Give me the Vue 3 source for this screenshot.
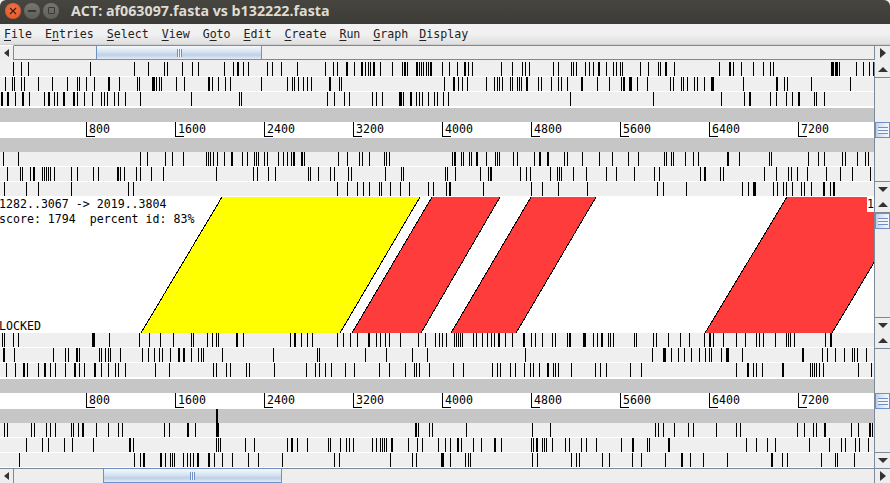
<script setup>
const menus = [
  { pre: '', key: 'F', post: 'ile' },
  { pre: 'E', key: 'n', post: 'tries' },
  { pre: '', key: 'S', post: 'elect' },
  { pre: '', key: 'V', post: 'iew' },
  { pre: 'G', key: 'o', post: 'to' },
  { pre: '', key: 'E', post: 'dit' },
  { pre: '', key: 'C', post: 'reate' },
  { pre: '', key: 'R', post: 'un' },
  { pre: '', key: 'G', post: 'raph' },
  { pre: '', key: 'D', post: 'isplay' }
]

const rulerMarks = [800, 1600, 2400, 3200, 4000, 4800, 5600, 6400, 7200].map((label, i) => ({
  label,
  x: Math.round(86.3 + i * 88.9)
}))

const scoreLine = 'score: 1794  percent id: 83%'

// Each feature row: [origin, "x x:w ..."] where x is measured in thirds of a pixel.
const parse = (segments) =>
  segments.flatMap(([origin, list]) =>
    list.split(' ').map((item) => {
      const [x, w] = item.split(':')
      return { x: Math.floor(origin + Number(x) / 3), w: Number(w || 1) }
    })
  )

const topBefore = [
  [[0, '40 64 85 271 403 445 493 502 547 577 595 673 700 712:2 730 745 802 817 844 892'], [300, '76 100 112 140:2 163 183 188 195 205 210 220:2 240 277 307 312:2 322 348 353 358 365 370 380 385 392:2 427 448 472 492:2 505 518 604 637 667 675 688 760 775 815 820 828 856 868 880 896:2 920 940 948 962 968 1020 1045 1075 1080 1095:2 1122'], [680, '118 147:2 160 184 220 250 271 280 454:3 465:2 472 478 529 550 568 580']],
  [[0, '16 37 43 64 73 115 157 202 232 238 259 283 325:2 358 412 418 457:3 469 478 484 529 553 625:2 637 655 676 691 784 862 877 883 895'], [300, '10 22 34 88:2 118 124 433 460:2 475 487 502 559 583 592 598 607 631 637 652 658 664 679 682 715 724 754 775 784 802 844:2 892 928 964 970:2 988:3 1012 1042 1111 1120'], [680, '4 10 22 43 52 73 94:3 190 288:2 313 322 394 511']],
  [[0, '4:2 22:2 46 67:2 88 133 145:2 163 172 190:2 220:2 232 253 277 304 313 322 343 355 376 421 574 718 724'], [300, '82 103 133 148 217 229 247 298 301 304 310 331:2 349 358 367 385 403 412 430 445 811 1060'], [680, '124 193 207:2 271 289 319 337 354:2 403 409 433']]
].map(parse)

const topAfter = [
  [[0, '10 55 421 442 496 517 550 620 626 632 640 652 673 694:2 727 742 763 768 775 793 802 835 850 862 874 880:2'], [300, '3 8 13 115 142 178 187 208 253 260 268 456 462:2 484 490 508 514 529 532 559 586 592 598 640 652 703 718:2 741:2 793 802 847 898 937 985 1015 1093 1099 1114 1120 1155'], [690, '10 25 112:2 148 238 244 355 385 403 457 466 502 526 535']],
  [[0, '22 61 67 91 100:2 127 133 139 145 151 163 214 232 280 295 352:2 361 373 408 421 454 490 649 760 772 805 826'], [300, '25 31 55 91 103 145 154 256 304 310 436 442 466 541 565 571:2 661 679 691 751 772 778 784 820 859 919 949 1003 1063 1078'], [690, '31 43:2 91 100 223 259 295 304 322 352 409 451 487 541']],
  [[0, '13 79 115 214 385 400'], [300, '112 142 172 190 208 238 244 271 301 328 385 400 439 448:2 550 694 727 775 862 1072 1090 1159'], [690, '157 175 190:3 250 262 280 289 307 334 343 364 400:2 421 430:2']]
].map(parse)

const bottomBefore = [
  [[0, '7 13 40 55 277:3 328 418 448 481 520 574 580 622 637 649 655 709:2 730 871 883:2'], [300, '4 22 37 112 130 151 172 205:2 229 241 256 268 301 355 376 406 418 427 439 463 469 475 481 487 520 529 547 562 574 583 595:2 616 637 670:2 694 706 727 757 766 802 808:2 850:3 880 892 904:2 925 931 940 1003 1009 1060 1069 1105 1141 1168'], [690, '43 58:2 70 100 139 166 199 208 220 256 289 295 301 313 406 421:2']],
  [[0, '10:2 43 160 196 205 229:2 238 298 304 316 325 331 361 427 445 463 478 487 511 535:2 550:2 574 595 604 610 667 820'], [300, '52 58 196 259 337 382 676 1057 1090:3 1114 1135 1153'], [690, '4 28 46 58 64 94 109:2 115 157 337:2 397 412 436 463 487 493 502 529']],
  [[0, '19 46 70:2 82 115 133:2 151 166 196 223:2 238 253 283:2 304 325 346 355 376 466 508 640 649 679 691 739 748 823'], [300, '19 46 58 76 94 136 163 238 268 316 343 349 358 388 460 490 577 592 601 631 646 673 691 700 718 742:2 760 766 775 814 886 901 919 991 1024'], [690, '139 172:2 190 199 217 277:2 361 367 373 379 388 400 505 544']]
].map(parse)

const bottomAfter = [
  [[0, '13 22 94 103 139 151 166 214 220 235 247:2 289 325 355 367 493 508 562:2 586 648:3'], [300, '346:2 355 388 397 499 697 751 1066 1075 1090 1123 1165'], [690, '10 79 139 151 322 343 370 379 403:2 484 505 538:2 547']],
  [[0, '79 127 145 193 217 280 388:2 400 649 655 661 736 763 862 874:2 892'], [300, '22 85 91 121 139 148 160 217 229 241 247 253 259 274:2 325 352 367 415 436 451 472:2 484 520 544 583:2 604 694 700 709:2 727 733 739 757 796 808 844 859 889 964 997:2 1042 1048 1105:2'], [690, '169 199 232 256 358 418 454 466 496 508 535']],
  [[0, '58 403 421 430:2 481:2 496 511 517 523 550 562 571 580 592:2 625:2 643 667 697 745 775 847'], [300, '103 118 271 337 349 424:2 430 451 496 505 511 697 712 814 829 838 907 928 997 1024 1096 1144:2'], [690, '1 40 112 244:2 277 292 394 436 442 493']]
].map(parse)

const panels = [
  { id: 'top', before: topBefore, after: topAfter, cursor: false },
  { id: 'bottom', before: bottomBefore, after: bottomAfter, cursor: true }
]

const matches = [
  { fill: '#ffff00', top: [222, 420], bottom: [141, 340] },
  { fill: '#ff3c3c', top: [432, 500], bottom: [352, 421] },
  { fill: '#ff3c3c', top: [531, 596], bottom: [451, 516] },
  { fill: '#ff3c3c', top: [787, 913], bottom: [705, 832] }
]
</script>

<template>
  <div class="window">
    <header class="titlebar">
      <span class="wm wm-close">
        <svg width="8" height="8" viewBox="0 0 8 8"><path d="M1 1l6 6M7 1L1 7" stroke="#4d1a08" stroke-width="1.3" /></svg>
      </span>
      <span class="wm wm-min"><i class="min-glyph"></i></span>
      <span class="wm wm-max"><i class="max-glyph"></i></span>
      <span class="title">ACT: af063097.fasta vs b132222.fasta</span>
    </header>

    <nav class="menubar">
      <span v-for="m in menus" :key="m.pre + m.key + m.post" class="menu">{{ m.pre }}<u>{{ m.key }}</u>{{ m.post }}</span>
    </nav>

    <div class="hscroll">
      <button class="hbtn"><i class="arrow-left"></i></button>
      <div class="htrack">
        <div class="hthumb hthumb-top"><i class="vgrip"></i></div>
      </div>
      <button class="hbtn hbtn-end"><i class="arrow-right"></i></button>
    </div>

    <template v-for="(panel, p) in panels" :key="panel.id">
      <section class="panel">
        <div class="panel-body">
          <div v-for="(row, r) in panel.before" :key="r" class="frame">
            <svg class="frame-svg" width="874" height="14">
              <rect v-for="(t, k) in row" :key="k" :x="t.x" y="0" :width="t.w" height="14" fill="#000" />
            </svg>
          </div>
          <div class="band band-first"></div>
          <div class="ruler">
            <span v-for="m in rulerMarks" :key="m.label" class="mark" :style="{ left: m.x + 'px' }">{{ m.label }}</span>
          </div>
          <div class="band">
            <i v-if="panel.cursor" class="cursor"></i>
          </div>
          <div v-for="(row, r) in panel.after" :key="r" class="frame">
            <svg class="frame-svg" width="874" height="14">
              <rect v-for="(t, k) in row" :key="k" :x="t.x" y="0" :width="t.w" height="14" fill="#000" />
            </svg>
          </div>
        </div>
        <div class="vscroll">
          <button class="vbtn"><i class="arrow-up"></i></button>
          <div class="vtrack">
            <div class="vthumb vthumb-ruler"><i class="hgrip"></i></div>
          </div>
          <button class="vbtn vbtn-end"><i class="arrow-down"></i></button>
        </div>
      </section>

      <section v-if="p === 0" class="compare">
        <div class="compare-body">
          <svg class="compare-svg" width="874" height="136" viewBox="0 0 874 136">
            <g v-for="(m, i) in matches" :key="i">
              <polygon :points="`${m.top[0]},0 ${m.top[1]},0 ${m.bottom[1]},136 ${m.bottom[0]},136`" :fill="m.fill" />
              <line :x1="m.top[0]" y1="0" :x2="m.bottom[0]" y2="136" stroke="#000" shape-rendering="crispEdges" />
              <line :x1="m.top[1]" y1="0" :x2="m.bottom[1]" y2="136" stroke="#000" shape-rendering="crispEdges" />
            </g>
          </svg>
          <div class="info">{{ '1282..3067 -> 2019..3804' }}</div>
          <div class="info info-second">{{ scoreLine }}</div>
          <div class="info info-locked">LOCKED</div>
          <div class="info-right">1</div>
        </div>
        <div class="vscroll">
          <button class="vbtn"><i class="arrow-up"></i></button>
          <div class="vtrack">
            <div class="vthumb"><i class="hgrip"></i></div>
          </div>
          <button class="vbtn vbtn-end"><i class="arrow-down"></i></button>
        </div>
      </section>
    </template>

    <div class="hscroll hscroll-bottom">
      <button class="hbtn"><i class="arrow-left"></i></button>
      <div class="htrack">
        <div class="hthumb hthumb-bottom"><i class="vgrip"></i></div>
      </div>
      <button class="hbtn hbtn-end"><i class="arrow-right"></i></button>
    </div>
  </div>
</template>

<style>
html, body { margin: 0; background: #ffffff; overflow: hidden; }
</style>

<style scoped>
.window {
  width: 890px;
  height: 483px;
  overflow: hidden;
  display: flex;
  flex-direction: column;
  font-family: "DejaVu Sans Mono", "Liberation Mono", monospace;
  font-size: 11.6px;
  color: #000;
  background: #eeeeee;
}

.titlebar {
  height: 24px;
  flex: none;
  display: flex;
  align-items: center;
  padding: 0 0 3px 5px;
  box-sizing: border-box;
  background: linear-gradient(#46453f, #3c3b37);
  border-radius: 6px 6px 0 0;
}
.wm {
  width: 16px;
  height: 16px;
  border-radius: 50%;
  margin-right: 3px;
  display: flex;
  align-items: center;
  justify-content: center;
  box-sizing: border-box;
  flex: none;
}
.wm-close { background: radial-gradient(circle at 50% 40%, #f2764a, #dc5020); }
.wm-min, .wm-max { background: linear-gradient(#777671, #5f5e59); }
.min-glyph { width: 8px; height: 2px; background: #3a3935; }
.max-glyph { width: 7px; height: 7px; border: 1.5px solid #3a3935; box-sizing: border-box; border-radius: 1px; }
.title {
  margin-left: 9px;
  font-family: "Open Sans", "Noto Sans", sans-serif;
  font-weight: 700;
  font-size: 14.25px;
  color: #dfdbd2;
  white-space: nowrap;
}

.menubar {
  height: 21px;
  flex: none;
  box-sizing: border-box;
  display: flex;
  align-items: center;
  gap: 13px;
  padding-left: 4px;
  background: linear-gradient(#f1f1f1 50%, #dfdfdf);
  border-bottom: 1px solid #d0d0d0;
  font-size: 11.6px;
  color: #222;
}
.menu u { text-underline-offset: 2px; }
.menu:last-child { margin-left: -2px; }

.hscroll {
  height: 17px;
  flex: none;
  display: flex;
  box-sizing: border-box;
  background: #eeeeee;
}
.hbtn {
  width: 14px;
  height: 15px;
  padding: 0;
  flex: none;
  background: #eeeeee;
  border: 0;
  border-right: 1px solid #7a8a99;
  border-top: 1px solid #ffffff;
  display: flex;
  align-items: center;
  justify-content: center;
}
.hbtn-end {
  width: 16px;
  border-right: 0;
  border-left: 1px solid #7a8a99;
  border-top: 1px solid #7a8a99;
}
.htrack {
  flex: 1;
  height: 15px;
  box-sizing: border-box;
  border-top: 1px solid #7a8a99;
  border-bottom: 1px solid #7a8a99;
  background: #eeeeee;
  display: flex;
}
.hthumb {
  height: 15px;
  margin-top: -1px;
  box-sizing: border-box;
  border: 1px solid #6f8fc6;
  background: linear-gradient(#f4f8fc, #dbe6f2 40%, #bdd0e6 70%, #e4ecf5);
  display: flex;
  align-items: center;
  justify-content: center;
}
.hthumb-top { width: 166px; margin-left: 82px; }
.hthumb-bottom { width: 179px; margin-left: 89px; }
.hscroll-bottom { height: 15px; border-top: 1px solid #7a8a99; }
.hscroll-bottom .hbtn { height: 14px; border-top: 0; }
.hscroll-bottom .htrack { height: 14px; border: 0; }
.vgrip {
  width: 5px;
  height: 8px;
  background: repeating-linear-gradient(90deg, #6f8fc6 0 1px, #f2f6fb 1px 2px);
}

.arrow-left { border: 4px solid transparent; border-left: 0; border-right: 5px solid #333; }
.arrow-right { border: 5px solid transparent; border-right: 0; border-left: 6px solid #333; }
.arrow-up { border: 5px solid transparent; border-top: 0; border-bottom: 5px solid #333; }
.arrow-down { border: 5px solid transparent; border-bottom: 0; border-top: 5px solid #333; }

.panel { display: flex; height: 135px; flex: none; background: #fff; }
.panel-body { width: 874px; flex: none; }
.frame { height: 15px; background: #efefef; border-bottom: 1px solid #fff; box-sizing: border-box; }
.frame-svg { display: block; }
.band { height: 14px; background: #c6c6c6; position: relative; }
.band-first { margin-top: 1px; }
.ruler { height: 16px; background: #fff; position: relative; }
.mark {
  position: absolute;
  top: 0;
  height: 15px;
  line-height: 15px;
  padding-left: 2px;
  border-left: 1px solid #000;
  font-size: 11.6px;
  background: linear-gradient(#000, #000) no-repeat 0 100% / 8px 1px;
}
.cursor { position: absolute; left: 216px; top: 0; bottom: 0; width: 2px; background: #000; }

.vscroll {
  width: 16px;
  flex: none;
  display: flex;
  flex-direction: column;
  box-sizing: border-box;
  border-left: 1px solid #7a8a99;
  background: #eeeeee;
}
.vbtn {
  height: 16px;
  flex: none;
  padding: 0;
  background: #eeeeee;
  border: 0;
  border-bottom: 1px solid #7a8a99;
  display: flex;
  align-items: center;
  justify-content: center;
}
.vbtn-end { border-bottom: 0; border-top: 1px solid #7a8a99; }
.vtrack { flex: 1; }
.vthumb {
  height: 16px;
  box-sizing: border-box;
  border: 1px solid #6f8fc6;
  background: linear-gradient(90deg, #bdd0e6, #dbe6f2 40%, #f4f8fc);
  display: flex;
  align-items: center;
  justify-content: center;
}
.vthumb-ruler { margin-top: 44px; }
.hgrip {
  width: 10px;
  height: 7px;
  background: repeating-linear-gradient(180deg, #6f8fc6 0 1px, #f2f6fb 1px 3px);
}

.compare { display: flex; height: 136px; flex: none; }
.compare-body { width: 874px; flex: none; position: relative; background: #fff; overflow: hidden; }
.compare-svg { display: block; }
.info {
  position: absolute;
  left: -1px;
  top: 0;
  line-height: 15px;
  white-space: pre;
}
.info-second { top: 15px; }
.info-locked { top: 122px; }
.info-right {
  position: absolute;
  right: 0;
  top: 0;
  width: 7px;
  line-height: 15px;
  background: #fff;
}
</style>
